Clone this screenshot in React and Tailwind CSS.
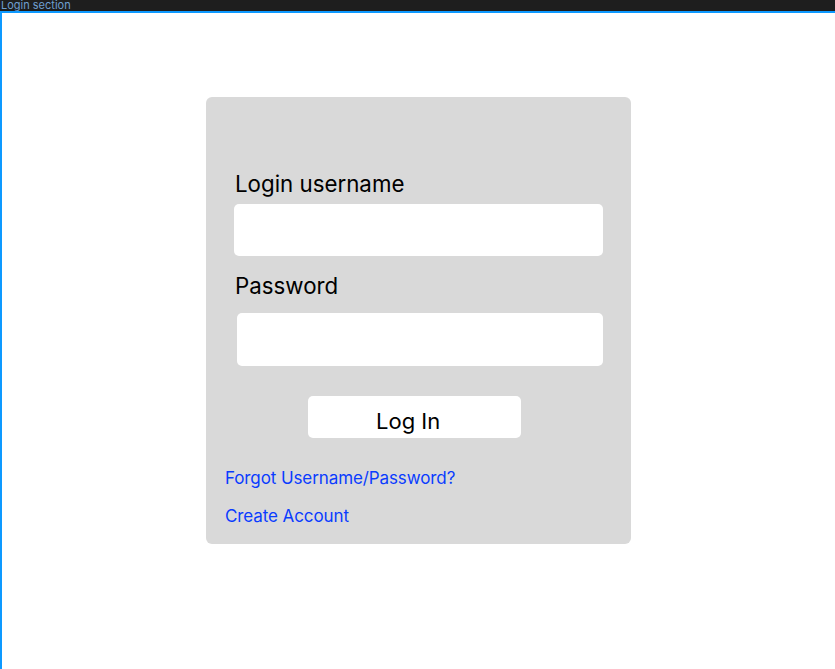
export default function App() {
  return (
    <div className="w-[835px] h-[669px] bg-white flex flex-col overflow-hidden" style={{ fontFamily: "Inter, 'Noto Sans', sans-serif" }}>
      <div className="h-[11px] bg-[#1e1e1e] flex items-center px-[1px]">
        <span className="text-[11px] leading-[11px] text-[#6f9fd0]">Login section</span>
      </div>
      <div className="flex-1 border-t-2 border-l-2 border-[#0d99ff] pt-[84px] pl-[204px]">
        <div className="w-[425px] h-[447px] bg-[#d9d9d9] rounded-[6px] flex flex-col pt-[74px]">
          <label className="ml-[29px] text-[22.3px] leading-[26px] text-black">Login username</label>
          <div className="ml-[28px] mt-[7px] w-[369px] h-[52px] bg-white rounded-[5px]" />
          <label className="ml-[29px] mt-[17px] text-[22.3px] leading-[26px] text-black">Password</label>
          <div className="ml-[31px] mt-[14px] w-[366px] h-[53px] bg-white rounded-[5px]" />
          <button className="ml-[102px] mt-[30px] w-[213px] h-[42px] bg-white rounded-[5px] text-[22px] leading-[26px] text-black pt-[8px] pl-[68px] text-left">
            Log In
          </button>
          <a className="ml-[19px] mt-[30px] text-[17px] leading-[20px] tracking-[-0.1px] text-[#0a3cff]">Forgot Username/Password?</a>
          <a className="ml-[19px] mt-[18px] text-[17px] leading-[20px] tracking-[-0.1px] text-[#0a3cff]">Create Account</a>
        </div>
      </div>
    </div>
  );
}
